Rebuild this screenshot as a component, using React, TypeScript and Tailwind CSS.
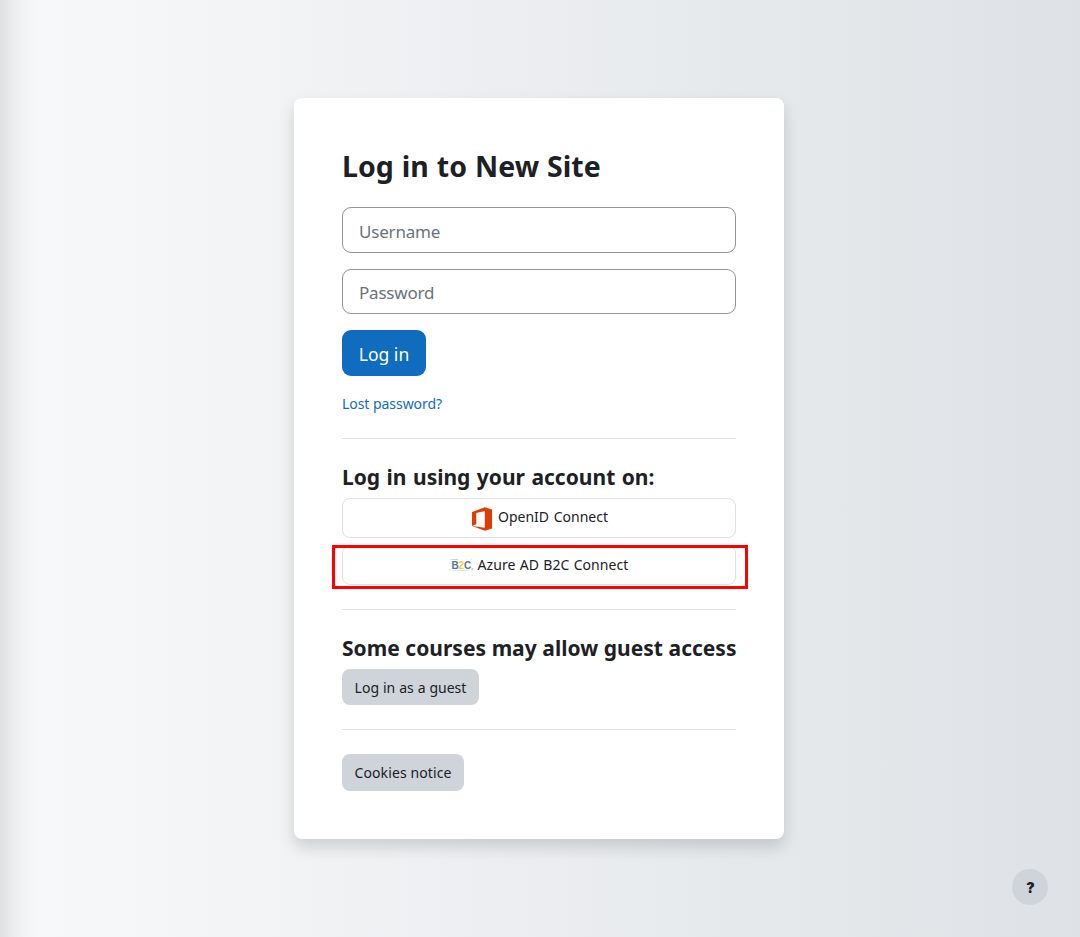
import type { ReactNode } from 'react';

function Divider({ className = '' }: { className?: string }) {
  return <div className={`h-px w-full bg-[#dee2e6] ${className}`} />;
}

function OfficeIcon() {
  return (
    <svg width="24" height="24" viewBox="0 0 24 24" className="mr-1 shrink-0 translate-y-[2px]">
      <path d="M2 5 14.8.3 22 2.4V21.6L14.8 23.7 2 19V5Z" fill="#dc3e06" />
      <path d="M6.3 6 14.8 4V20.8L2 19 6.3 17.3Z" fill="#fff" />
    </svg>
  );
}

function B2CIcon() {
  return (
    <svg width="24" height="14" viewBox="0 0 24 14" className="mr-1 shrink-0 translate-y-[1px] font-['Liberation_Sans',sans-serif] text-[10px] font-bold">
      <path d="M2.5 1.5H9" fill="none" stroke="#c3d5e1" strokeWidth="1" />
      <path d="M3 12.5H20" fill="none" stroke="#dce6ec" strokeWidth="1" />
      <path d="M.5 1.5H1.5M22 1.5H23M.5 12H1.5" stroke="#f4e6a4" strokeWidth="1" />
      <text x="2.4" y="10.6" fill="#4d7797">B</text>
      <text x="9.4" y="10.6" fill="#f1cf3d">2</text>
      <text x="14.9" y="10.6" fill="#4d7797">C</text>
      <path d="M23.2 10V12.5" stroke="#9fb9cb" strokeWidth="1" />
    </svg>
  );
}

function Provider({ icon, children }: { icon: ReactNode; children: ReactNode }) {
  return (
    <button className="flex h-10 w-full items-center justify-center rounded-lg border border-[#dee2e6] bg-white pb-[2px] text-[14px] whitespace-nowrap text-[#1d2125]">
      {icon}
      {children}
    </button>
  );
}

export default function App() {
  return (
    <div className="relative flex h-[937px] w-full justify-center overflow-hidden bg-linear-to-r from-[#f8f9fa] to-[#dee2e6] pt-[98px] pr-[2px] font-['Noto_Sans','Open_Sans',sans-serif] text-[#1d2125]">
      <div className="absolute inset-y-0 left-0 w-[38px] bg-linear-to-r from-black/10 via-black/3 to-transparent" />
      <main className="relative flex h-[741px] w-[490px] flex-col items-start rounded-lg bg-white px-12 pt-[50px] shadow-[0_8px_16px_rgba(0,0,0,0.15)]">
        <h1 className="h-9 text-[28.5px] leading-9 font-bold [word-spacing:0.6px] whitespace-nowrap">Log in to New Site</h1>
        <input className="mt-[23px] h-[46px] w-full rounded-[9px] border border-[#8f959e] px-4 pt-[2px] text-[17px] tracking-[-0.2px] placeholder:text-[#6a737b]" placeholder="Username" />
        <input className="mt-4 h-[45px] w-full rounded-[9px] border border-[#8f959e] px-4 pt-px text-[17px] tracking-[-0.2px] placeholder:text-[#6a737b]" placeholder="Password" type="password" />
        <button className="mt-4 flex h-[46px] w-[84px] items-center justify-center rounded-[9px] bg-[#0f6cbf] pt-[2px] text-[17.5px] whitespace-nowrap text-white">Log in</button>
        <a className="mt-4 h-[23px] text-[14px] leading-[23px] tracking-[-0.05px] text-[#0f6cbf]">Lost password?</a>
        <Divider className="mt-[23px]" />
        <h2 className="mt-[25px] h-[26px] text-[21px] leading-[27px] font-bold [word-spacing:1px] whitespace-nowrap">Log in using your account on:</h2>
        <div className="mt-2 w-full"><Provider icon={<OfficeIcon />}><span className="-translate-y-px [word-spacing:1px]">OpenID Connect</span></Provider></div>
        <div className="relative mt-[7px] h-10 w-full">
          <Provider icon={<B2CIcon />}><span className="tracking-[0.08px] [word-spacing:0.5px]">Azure AD B2C Connect</span></Provider>
          <div className="pointer-events-none absolute top-0 -left-[10px] h-11 w-[416px] border-3 border-[#fe0000]" />
        </div>
        <Divider className="mt-6" />
        <h2 className="mt-[25px] h-[26px] text-[21px] leading-[27px] font-bold [word-spacing:0.2px] whitespace-nowrap">Some courses may allow guest access</h2>
        <button className="mt-2 h-9 w-[137px] rounded-lg bg-[#ced4da] text-[14px] [word-spacing:0.3px] whitespace-nowrap">Log in as a guest</button>
        <Divider className="mt-6" />
        <button className="mt-6 h-[37px] w-[122px] rounded-lg bg-[#ced4da] text-[14px] tracking-[0.1px] whitespace-nowrap">Cookies notice</button>
      </main>
      <button className="absolute right-8 bottom-8 flex size-9 items-center justify-center rounded-full bg-[#ced4da] pl-px font-['Inter',sans-serif] text-[14px] font-black">?</button>
    </div>
  );
}
